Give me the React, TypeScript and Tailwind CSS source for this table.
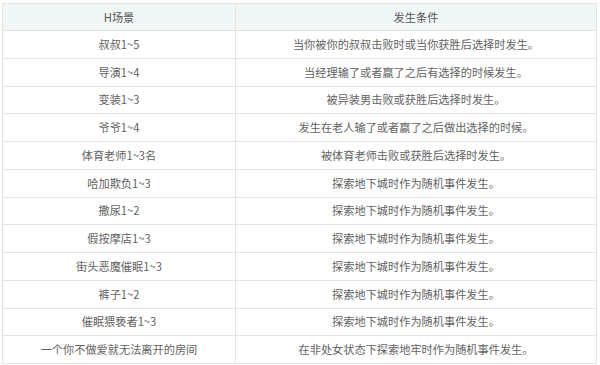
import React from 'react';

const ROWS: [string, string][] = [
  ['叔叔1~5', '当你被你的叔叔击败时或当你获胜后选择时发生。'],
  ['导演1~4', '当经理输了或者赢了之后有选择的时候发生。'],
  ['变装1~3', '被异装男击败或获胜后选择时发生。'],
  ['爷爷1~4', '发生在老人输了或者赢了之后做出选择的时候。'],
  ['体育老师1~3名', '被体育老师击败或获胜后选择时发生。'],
  ['哈加欺负1~3', '探索地下城时作为随机事件发生。'],
  ['撒尿1~2', '探索地下城时作为随机事件发生。'],
  ['假按摩店1~3', '探索地下城时作为随机事件发生。'],
  ['街头恶魔催眠1~3', '探索地下城时作为随机事件发生。'],
  ['裤子1~2', '探索地下城时作为随机事件发生。'],
  ['催眠猥亵者1~3', '探索地下城时作为随机事件发生。'],
  ['一个你不做爱就无法离开的房间', '在非处女状态下探索地牢时作为随机事件发生。'],
];

export default function App() {
  return (
    <div className="w-[600px] h-[365px] bg-white pt-[3px] pl-[2px] font-['Noto_Sans_CJK_SC',sans-serif] text-[11.2px] text-[#626262]">
      <table className="w-[595px] border-collapse table-fixed">
        <colgroup>
          <col className="w-[233px]" />
          <col />
        </colgroup>
        <thead>
          <tr className="h-[27px] bg-[#f1f6f7]">
            <th className="border border-[#e3e3e3] font-normal text-[#555]">H场景</th>
            <th className="border border-[#e3e3e3] font-normal text-[#555]">发生条件</th>
          </tr>
        </thead>
        <tbody>
          {ROWS.map(([scene, cond]) => (
            <tr key={scene} className="h-[27.75px]">
              <td className="border border-[#e3e3e3] text-center">{scene}</td>
              <td className="border border-[#e3e3e3] text-center">{cond}</td>
            </tr>
          ))}
        </tbody>
      </table>
    </div>
  );
}
